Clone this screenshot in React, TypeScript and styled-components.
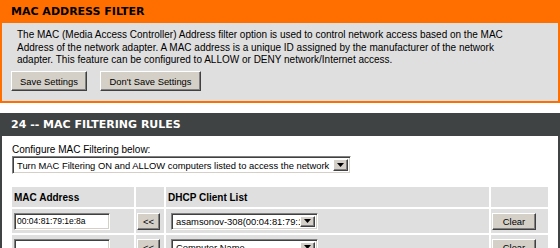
import styled, { createGlobalStyle } from 'styled-components';

const GlobalStyle = createGlobalStyle`
	html, body {
		margin: 0;
		padding: 0;
		background: #fff;
	}
	body {
		font-family: "Liberation Sans", Arial, sans-serif;
		font-size: 10px;
		color: #000;
	}
`;

const Page = styled.div`
	width: 560px;
	display: flex;
	flex-direction: column;
	gap: 10px;
`;

const Box = styled.section<{ $accent: string; $bg: string }>`
	border: 2px solid ${(p) => p.$accent};
	border-top: 0;
	background: ${(p) => p.$bg};
`;

const BoxTitle = styled.h2<{ $bg: string; $color: string }>`
	margin: 0 -2px;
	height: 23px;
	padding-left: 11px;
	background: ${(p) => p.$bg};
	color: ${(p) => p.$color};
	font: bold 11px/23px "DejaVu Sans", Verdana, sans-serif;
`;

const IntroBody = styled.div`
	padding: 6px 9px 10px;
`;

const Intro = styled.p`
	margin: 0 0 4.5px 6px;
	line-height: 12.5px;
	white-space: nowrap;
`;

const ButtonRow = styled.div`
	display: flex;
	gap: 13px;
`;

const Button = styled.button<{ $w: number; $h?: number }>`
	width: ${(p) => p.$w}px;
	height: ${(p) => p.$h ?? 20}px;
	padding: 0;
	box-sizing: border-box;
	background: #d4d0c8;
	border-style: solid;
	border-width: 1px;
	border-color: #fff #404040 #404040 #fff;
	box-shadow: inset -1px -1px #808080;
	font: 9.4px "Liberation Sans", Arial, sans-serif;
	color: #000;
`;

const RulesBody = styled.div`
	padding: 8px 10px 0;
`;

const Label = styled.div`
	line-height: 12px;
`;

const Select = styled.div<{ $w: number; $h: number }>`
	display: flex;
	align-items: center;
	width: ${(p) => p.$w}px;
	height: ${(p) => p.$h}px;
	box-sizing: border-box;
	background: #fff;
	border-style: solid;
	border-width: 1px;
	border-color: #808080 #fff #fff #808080;
	box-shadow: inset 1px 1px #404040, inset -1px -1px #d4d0c8;
	padding: 2px 2px 2px 2px;
	font: 9.4px "Liberation Sans", Arial, sans-serif;
`;

const SelectText = styled.span`
	flex: 1;
	overflow: hidden;
	white-space: nowrap;
	padding-left: 2px;
`;

const SelectArrow = styled.span`
	display: flex;
	align-items: center;
	justify-content: center;
	width: 15px;
	height: 100%;
	box-sizing: border-box;
	background: #d4d0c8;
	border-style: solid;
	border-width: 1px;
	border-color: #fff #404040 #404040 #fff;
	box-shadow: inset -1px -1px #808080;
`;

const Grid = styled.div`
	display: grid;
	grid-template-columns: 122px 28px 323px 57px;
	grid-template-rows: 20px;
	grid-auto-rows: 24px;
	gap: 2px;
	margin-top: 13px;
`;

const Cell = styled.div<{ $head?: boolean; $pad?: number }>`
	display: flex;
	align-items: center;
	padding-left: ${(p) => p.$pad ?? 2}px;
	background: #dfdfdf;
	font-weight: ${(p) => (p.$head ? 'bold' : 'normal')};
`;

const TextInput = styled.input`
	width: 96px;
	height: 17px;
	box-sizing: border-box;
	margin: 0;
	padding: 0 2px;
	background: #fff;
	border-style: solid;
	border-width: 1px;
	border-color: #808080 #fff #fff #808080;
	box-shadow: inset 1px 1px #404040, inset -1px -1px #d4d0c8;
	font: 8.5px "Liberation Sans", Arial, sans-serif;
	color: #000;
	outline: none;
`;

function Arrow() {
	return (
		<SelectArrow>
			<svg width="7" height="4" viewBox="0 0 7 4">
				<path d="M0 0h7L3.5 4z" fill="#000" />
			</svg>
		</SelectArrow>
	);
}

const rules = [
	{ mac: '00:04:81:79:1e:8a', client: 'asamsonov-308(00:04:81:79:1e:8a)' },
	{ mac: '', client: 'Computer Name' },
];

export default function App() {
	return (
		<>
			<GlobalStyle />
			<Page>
				<Box $accent="#ff6f00" $bg="#dfdfdf">
					<BoxTitle $bg="#ff6f00" $color="#000">
						MAC ADDRESS FILTER
					</BoxTitle>
					<IntroBody>
						<Intro>
							The MAC (Media Access Controller) Address filter option is used to control network access based on the MAC
							<br />
							Address of the network adapter. A MAC address is a unique ID assigned by the manufacturer of the network
							<br />
							adapter. This feature can be configured to ALLOW or DENY network/Internet access.
						</Intro>
						<ButtonRow>
							<Button $w={76}>Save Settings</Button>
							<Button $w={101}>Don't Save Settings</Button>
						</ButtonRow>
					</IntroBody>
				</Box>
				<Box $accent="#404343" $bg="#fff">
					<BoxTitle $bg="#404343" $color="#fff">
						24 -- MAC FILTERING RULES
					</BoxTitle>
					<RulesBody>
						<Label>Configure MAC Filtering below:</Label>
						<Select $w={339} $h={18}>
							<SelectText>Turn MAC Filtering ON and ALLOW computers listed to access the network</SelectText>
							<Arrow />
						</Select>
						<Grid>
							<Cell $head>MAC Address</Cell>
							<Cell />
							<Cell $head>DHCP Client List</Cell>
							<Cell />
							{rules.map((r, i) => [
								<Cell key={`m${i}`}>
									<TextInput defaultValue={r.mac} />
								</Cell>,
								<Cell key={`b${i}`} $pad={1}>
									<Button $w={23} $h={17}>
										&lt;&lt;
									</Button>
								</Cell>,
								<Cell key={`c${i}`} $pad={5}>
									<Select $w={147} $h={17}>
										<SelectText>{r.client}</SelectText>
										<Arrow />
									</Select>
								</Cell>,
								<Cell key={`x${i}`} $pad={1}>
									<Button $w={44} $h={17}>
										Clear
									</Button>
								</Cell>,
							])}
						</Grid>
					</RulesBody>
				</Box>
			</Page>
		</>
	);
}
